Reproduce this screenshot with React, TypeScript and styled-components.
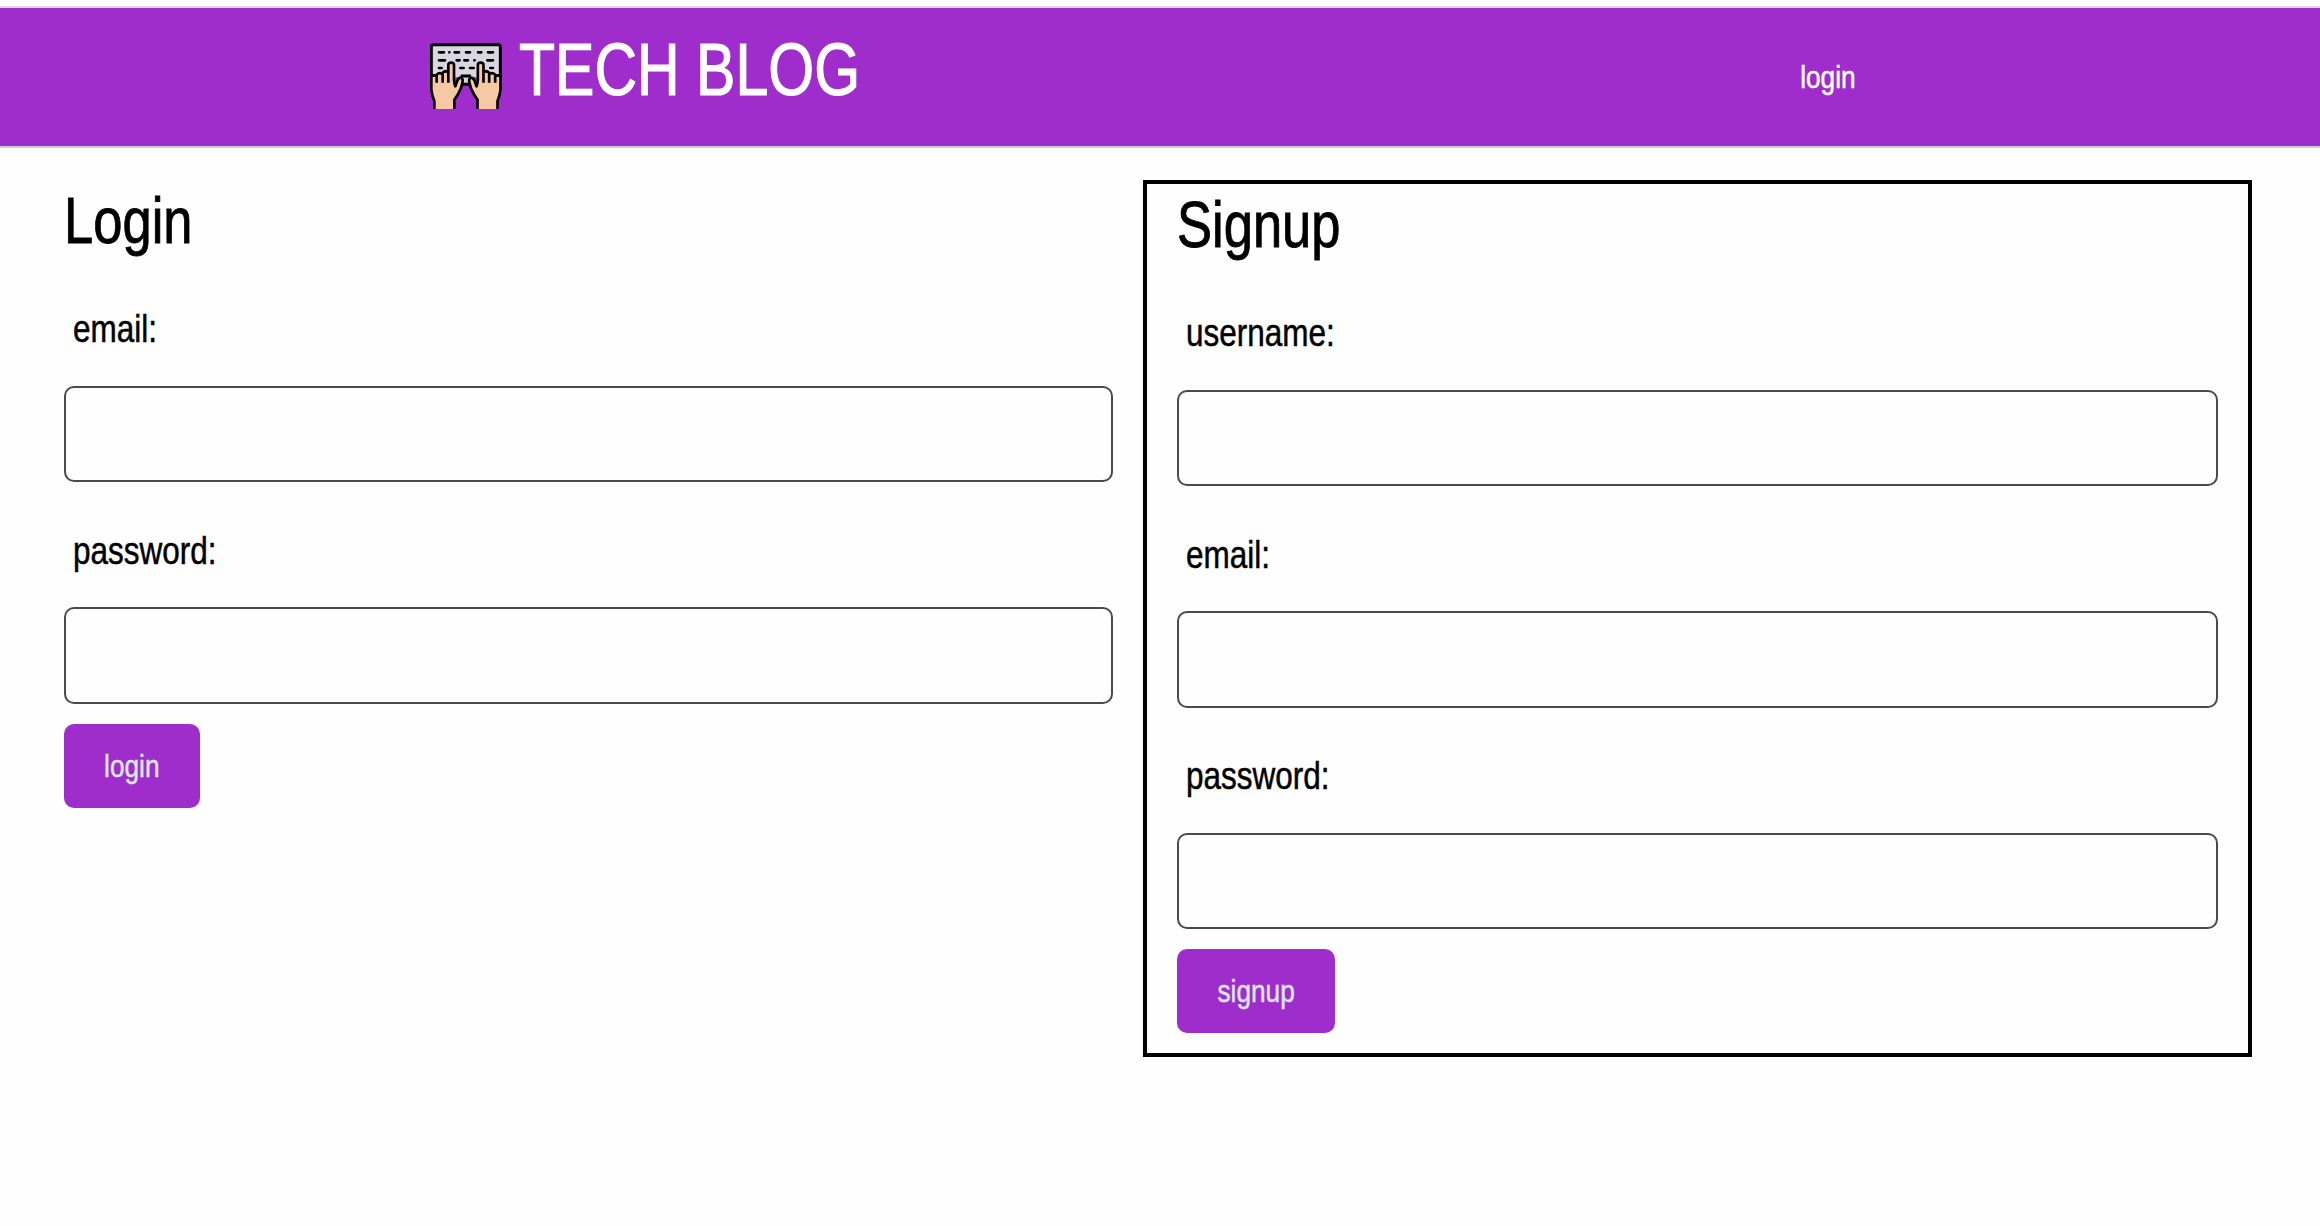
import React from "react";
import styled, { createGlobalStyle } from "styled-components";

const purple = "#9f2dcc";

const GlobalStyle = createGlobalStyle`
  *, *::before, *::after { box-sizing: border-box; }
  body {
    margin: 0;
    background: #fefefe;
    color: #000;
    font-family: "Liberation Sans", Arial, sans-serif;
  }
`;

const Page = styled.div`
  min-height: 1226px;
  padding-top: 6px;
`;

/* Narrow lettering: squeezes the regular face horizontally. */
const Condensed = styled.span<{ $ratio?: number; $origin?: string; $weight?: number }>`
  display: inline-block;
  transform: scaleX(${({ $ratio = 0.82 }) => $ratio});
  transform-origin: ${({ $origin = "left" }) => $origin} center;
  white-space: nowrap;
  -webkit-text-stroke: ${({ $weight = 0.5 }) => $weight}px currentColor;
`;

const Header = styled.header`
  display: flex;
  justify-content: space-between;
  height: 142px;
  padding: 0 464px 0 430px;
  background: ${purple};
  border-top: 2px solid #d9d9d9;
  border-bottom: 2px solid #cbcbcb;
`;

const Brand = styled.h1`
  display: flex;
  align-items: flex-start;
  gap: 17px;
  margin: 0;
  padding-top: 19px;
  color: #fff;
  font-size: 75px;
  font-weight: 400;
  line-height: 85px;
  white-space: nowrap;
`;

const Logo = styled.svg`
  width: 72px;
  height: 66px;
  margin-top: 16px;
`;

const NavLink = styled.a`
  padding-top: 49px;
  color: #fff;
  font-size: 32px;
  line-height: 40px;
`;

const Main = styled.main`
  display: grid;
  grid-template-columns: 1049px 1109px;
  column-gap: 30px;
  align-items: start;
  padding: 32px 0 0 64px;
`;

const Panel = styled.form<{ $framed?: boolean }>`
  ${({ $framed }) => $framed && "border: 4px solid #000; padding: 0 30px 20px;"}
`;

const Heading = styled.h2`
  height: 80px;
  margin: 0;
  font-size: 65px;
  font-weight: 400;
  line-height: 82px;
`;

const Field = styled.label`
  display: block;
  & + & { margin-top: -1px; }
`;

const Caption = styled.span`
  display: block;
  height: 126px;
  padding: 44.4px 0 0 9px;
  font-size: 38.4px;
  line-height: 49px;
`;

const Input = styled.input`
  display: block;
  width: 100%;
  height: 96.4px;
  padding: 0 20px;
  border: 2px solid #4a4a4a;
  border-radius: 10px;
  background: #fefefe;
  font: inherit;
  font-size: 32px;
  outline: none;
`;

const Submit = styled.button<{ $width: number }>`
  display: block;
  width: ${({ $width }) => $width}px;
  height: 84px;
  margin-top: 19.8px;
  padding: 1px 0 0;
  border: 0;
  border-radius: 10px;
  background: ${purple};
  color: #dce6e9;
  font: inherit;
  font-size: 32px;
`;

const Hand = () => (
  <>
    <path
      fill="#f5c9a3"
      d="M34 138Q42 132 50 138V133Q59 124 68 132V127Q77 119 85 126V104Q85 97 93.500 97Q102 97 102 104V170L111 151Q118 139 125 143Q130 147 127 158Q124 176 113 193L103 208V236H43V212Q36 196 34 178Z"
    />
    <path
      fill="none"
      stroke="#000"
      strokeWidth="8"
      strokeLinejoin="round"
      d="M43 236V212Q36 196 34 178V138Q42 132 50 138V133Q59 124 68 132V127Q77 119 85 126V104Q85 97 93.500 97Q102 97 102 104V150Q103 160 106 168L112 151Q118 139 125 143Q130 147 127 158Q124 176 113 193L103 208V236M50 136V157M68 130V157M85 124V157"
    />
  </>
);

const KeyboardLogo = () => (
  <Logo viewBox="30 38 216 198" aria-hidden="true">
    <path d="M34 150V49Q34 43 40 43H235Q241 43 241 49V150L160 140V162H116V140Z" fill="#d9d8e2" />
    <path d="M34 150V49Q34 43 40 43H235Q241 43 241 49V150M118 162H158M122 137H153" fill="none" stroke="#000" strokeWidth="9" />
    <path
      d="M57 66H72M88 66H88.1M104 66H117M138 66H150M174 66H184M204 66H219M57 90H75M110 90H119M133 90H144M163 90H164M202 90H219M57 113H65M121 113H131M150 113H161M211 113H219"
      fill="none"
      stroke="#000"
      strokeWidth="8"
      strokeLinecap="round"
    />
    <Hand />
    <g transform="translate(275.500 0) scale(-1 1)">
      <Hand />
    </g>
  </Logo>
);

const TextField = ({ label, type }: { label: string; type: string }) => (
  <Field>
    <Caption>
      <Condensed>{label}</Condensed>
    </Caption>
    <Input type={type} />
  </Field>
);

export default function App() {
  return (
    <Page>
      <GlobalStyle />
      <Header>
        <Brand>
          <KeyboardLogo />
          <Condensed $ratio={0.787} $weight={1.2}>TECH BLOG</Condensed>
        </Brand>
        <NavLink>
          <Condensed $origin="right">login</Condensed>
        </NavLink>
      </Header>
      <Main>
        <Panel>
          <Heading>
            <Condensed $ratio={0.808} $weight={0.9}>Login</Condensed>
          </Heading>
          <TextField label="email:" type="text" />
          <TextField label="password:" type="password" />
          <Submit type="button" $width={136}>
            <Condensed $origin="center">login</Condensed>
          </Submit>
        </Panel>
        <Panel $framed>
          <Heading>
            <Condensed $ratio={0.808} $weight={0.9}>Signup</Condensed>
          </Heading>
          <TextField label="username:" type="text" />
          <TextField label="email:" type="text" />
          <TextField label="password:" type="password" />
          <Submit type="button" $width={158}>
            <Condensed $origin="center">signup</Condensed>
          </Submit>
        </Panel>
      </Main>
    </Page>
  );
}
